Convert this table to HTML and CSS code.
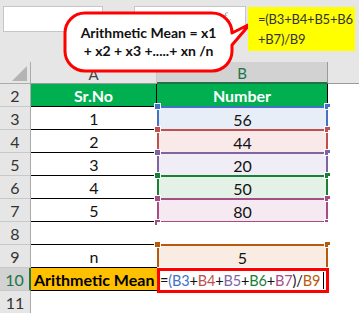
FILE: index.html
```html
<!DOCTYPE html>
<html>
<head>
<meta charset="utf-8">
<link rel="stylesheet" href="styles.css">
</head>
<body>
<div class="app">
  <div class="topbar">
    <div class="namebox"></div>
    <div class="fbox"><span class="fx">f<span class="fxs">x</span></span></div>
  </div>
  <div class="grid">
    <div class="corner"><svg width="31" height="22" viewBox="0 0 31 22"><polygon points="12,19 27,19 27,4" fill="#b4b4b4"/></svg></div>
    <div class="colh">A</div>
    <div class="colh sel">B</div>
    <div class="colh last"></div>

    <div class="rh">2</div>
    <div class="c a hdr">Sr.No</div>
    <div class="c hdr hdrb">Number</div>
    <div class="c e"></div>

    <div class="rh">3</div>
    <div class="c a">1</div>
    <div class="c b r1">56<i class="h tl"></i><i class="h tr"></i></div>
    <div class="c e"></div>

    <div class="rh">4</div>
    <div class="c a">2</div>
    <div class="c b r2">44<i class="h tl"></i><i class="h tr"></i></div>
    <div class="c e"></div>

    <div class="rh">5</div>
    <div class="c a">3</div>
    <div class="c b r3">20<i class="h tl"></i><i class="h tr"></i></div>
    <div class="c e"></div>

    <div class="rh">6</div>
    <div class="c a">4</div>
    <div class="c b r4">50<i class="h tl"></i><i class="h tr"></i></div>
    <div class="c e"></div>

    <div class="rh">7</div>
    <div class="c a">5</div>
    <div class="c b r5 closed">80<i class="h tl"></i><i class="h tr"></i><i class="h bl"></i><i class="h br"></i></div>
    <div class="c e"></div>

    <div class="rh">8</div>
    <div class="c a"></div>
    <div class="c e"></div>
    <div class="c e"></div>

    <div class="rh">9</div>
    <div class="c a">n</div>
    <div class="c b r6">5<i class="h tl"></i><i class="h tr"></i></div>
    <div class="c e"></div>

    <div class="rh selr">10</div>
    <div class="c a mean">Arithmetic Mean</div>
    <div class="c formula"><span class="k">=</span><span class="c1">(B3</span><span class="k">+</span><span class="c2">B4</span><span class="k">+</span><span class="c3">B5</span><span class="k">+</span><span class="c4">B6</span><span class="k">+</span><span class="c5">B7</span><span class="k">)/</span><span class="c6">B9</span><span class="caret"></span></div>
    <div class="c e"></div>

    <div class="rh">11</div>
    <div class="c e"></div>
    <div class="c e"></div>
    <div class="c e"></div>
  </div>

  <svg class="bubble" width="359" height="80" viewBox="0 0 359 80">
    <path d="M85 13 H212 A20 20 0 0 1 232 33 L250 24 L232 45 V51 A20 20 0 0 1 212 71 H85 A20 20 0 0 1 65 51 V33 A20 20 0 0 1 85 13 Z" fill="#fff" stroke="#f00" stroke-width="3" stroke-linejoin="round"/>
  </svg>
  <div class="bubble-text">
    <div>Arithmetic Mean = x1</div>
    <div>+ x2 + x3 +.....+ xn /n</div>
  </div>
  <div class="note">=(B3+B4+B5+B6<br>+B7)/B9</div>
</div>
</body>
</html>
```
FILE: styles.css
```css
html, body {
  margin: 0;
  padding: 0;
  background: #fff;
}
.app {
  position: relative;
  width: 359px;
  height: 313px;
  overflow: hidden;
  font-family: Lato, "Liberation Sans", sans-serif;
}
.topbar {
  height: 62px;
  background: #e6e6e6;
  display: flex;
  align-items: flex-start;
  padding: 6px 0 0 3px;
  box-sizing: border-box;
  gap: 31px;
}
.namebox {
  width: 100px;
  height: 26px;
  background: #fff;
  border: 1px solid #c6c6c6;
  box-sizing: border-box;
}
.fbox {
  width: 112px;
  height: 26px;
  background: #fff;
  border: 1px solid #c6c6c6;
  box-sizing: border-box;
  display: flex;
  justify-content: flex-end;
  padding-right: 14px;
}
.fx {
  font-family: "Liberation Serif", serif;
  font-style: italic;
  color: #a0a0a0;
  font-size: 13px;
  line-height: 16px;
  margin-top: 2px;
}
.fxs {
  font-size: 10px;
  position: relative;
  top: 3px;
}
.grid {
  display: grid;
  grid-template-columns: 31px 126px 171px 31px;
  grid-template-rows: 22px repeat(10, 23px);
}
.corner {
  background: #e6e6e6;
  border-right: 1px solid #ababab;
  border-bottom: 1px solid #ababab;
  box-sizing: border-box;
}
.corner svg { display: block; }
.colh {
  background: #e6e6e6;
  border-right: 1px solid #c8c8c8;
  border-bottom: 1px solid #9b9b9b;
  box-sizing: border-box;
  display: flex;
  align-items: center;
  justify-content: center;
  font-size: 15px;
  color: #444;
  padding-top: 2px;
}
.colh.sel {
  background: #d2d2d2;
  color: #217346;
  border-bottom: 2px solid #217346;
  border-right: 1px solid #9b9b9b;
}
.colh.last { border-right: none; }
.rh {
  background: #e6e6e6;
  border-right: 1px solid #ababab;
  border-bottom: 1px solid #c8c8c8;
  box-sizing: border-box;
  display: flex;
  align-items: center;
  justify-content: center;
  font-size: 16px;
  color: #333;
  padding-top: 1px;
}
.rh.selr {
  background: #d2d2d2;
  color: #217346;
  border-right: 2px solid #217346;
}
.c {
  box-sizing: border-box;
  display: flex;
  align-items: center;
  justify-content: center;
  font-size: 16px;
  color: #111;
  position: relative;
}
.c.a {
  border-bottom: 1px solid #000;
}
.c.hdr {
  background: #00b050;
  color: #fff;
  font-weight: bold;
  border-right: 1px solid #000;
}
.c.hdrb {
  border-bottom: 1px solid #000;
}
.c.e { background: #fff; }
.c.b {
  border: 2px solid;
  border-bottom: none;
  margin-top: -1px;
  margin-bottom: 1px;
  padding-top: 1px;
}
.c.b.closed {
  border-bottom: 2px solid;
  margin-bottom: -1px;
}
.r1 { border-color: #4472c4 !important; background: #e8eef8; }
.r2 { border-color: #c0504d !important; background: #f9e9e9; }
.r3 { border-color: #8064a2 !important; background: #f1edf6; }
.r4 { border-color: #1a7f37 !important; background: #e4f1e7; }
.r5 { border-color: #a64d86 !important; background: #f5eaf1; }
.r6 { border-color: #b85a0b !important; background: #f9ece2; }
.r1 .h { background: #4472c4; }
.r2 .h { background: #c0504d; }
.r3 .h { background: #8064a2; }
.r4 .h { background: #1a7f37; }
.r5 .h { background: #a64d86; }
.r6 .h { background: #b85a0b; }
.h {
  position: absolute;
  width: 5px;
  height: 5px;
  border: 1px solid #fff;
  box-sizing: content-box;
}
.h.tl { left: -5px; top: -5px; }
.h.tr { right: -5px; top: -5px; }
.h.bl { left: -5px; bottom: -5px; }
.h.br { right: -5px; bottom: -5px; }
.c.mean {
  background: #ffc000;
  font-weight: bold;
  color: #000;
  justify-content: flex-start;
  padding-left: 3px;
  white-space: nowrap;
}
.c.formula {
  border: 3px solid #f00;
  margin: 0 -1px -2px 0;
  justify-content: flex-start;
  padding-left: 0;
  white-space: nowrap;
  z-index: 2;
  background: #fff;
  font-size: 14.5px;
  letter-spacing: -0.15px;
}
.formula .k { color: #111; }
.formula .c1 { color: #4472c4; }
.formula .c2 { color: #c0504d; }
.formula .c3 { color: #8064a2; }
.formula .c4 { color: #1a7f37; }
.formula .c5 { color: #a64d86; }
.formula .c6 { color: #b85a0b; }
.caret {
  display: inline-block;
  width: 1px;
  height: 17px;
  background: #000;
  margin-left: 3px;
}
.bubble {
  position: absolute;
  left: 0;
  top: 0;
}
.bubble-text {
  position: absolute;
  left: 65px;
  top: 13px;
  width: 167px;
  height: 58px;
  display: flex;
  flex-direction: column;
  justify-content: center;
  align-items: center;
  font-weight: bold;
  font-size: 14px;
  line-height: 18px;
  color: #111;
  white-space: nowrap;
}
.note {
  position: absolute;
  left: 248px;
  top: 7px;
  width: 107px;
  height: 44px;
  box-sizing: border-box;
  background: #ffff00;
  padding: 2px 0 0 10px;
  font-size: 13px;
  line-height: 20px;
  color: #333;
  white-space: nowrap;
  letter-spacing: -0.2px;
}
```
